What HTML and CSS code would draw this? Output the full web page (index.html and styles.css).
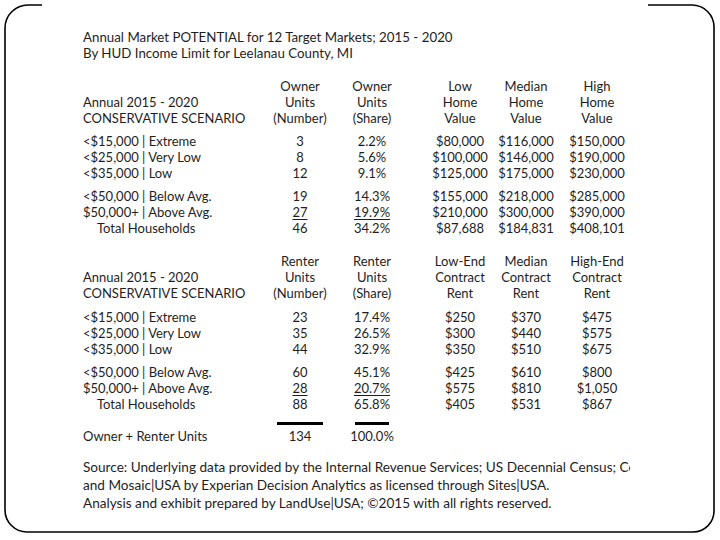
FILE: index.html
```html
<!DOCTYPE html>
<html>
<head>
<meta charset="utf-8">
<link rel="stylesheet" href="styles.css">
</head>
<body>
<svg class="frame" width="720" height="540" viewBox="0 0 720 540">
  <path d="M42,5 H28 A23,23 0 0 0 5,28 V510 A22,22 0 0 0 27,532 H693 A21,21 0 0 0 714,511 V27 A22,22 0 0 0 692,5 H648" fill="none" stroke="#000" stroke-width="1.6"/>
</svg>
<div class="sheet">
  <div class="title">
    <div>Annual Market POTENTIAL for 12 Target Markets; 2015 - 2020</div>
    <div>By HUD Income Limit for Leelanau County, MI</div>
  </div>

  <div class="table owner">
    <div class="row head">
      <div class="label">Annual 2015 - 2020<br>CONSERVATIVE SCENARIO</div>
      <div class="c">Owner<br>Units<br>(Number)</div>
      <div class="c">Owner<br>Units<br>(Share)</div>
      <div></div>
      <div class="c">Low<br>Home<br>Value</div>
      <div class="c">Median<br>Home<br>Value</div>
      <div class="c">High<br>Home<br>Value</div>
    </div>
    <div class="row first">
      <div class="label">&lt;$15,000 | Extreme</div>
      <div class="c">3</div><div class="c">2.2%</div><div></div>
      <div class="c">$80,000</div><div class="c">$116,000</div><div class="c">$150,000</div>
    </div>
    <div class="row">
      <div class="label">&lt;$25,000 | Very Low</div>
      <div class="c">8</div><div class="c">5.6%</div><div></div>
      <div class="c">$100,000</div><div class="c">$146,000</div><div class="c">$190,000</div>
    </div>
    <div class="row">
      <div class="label">&lt;$35,000 | Low</div>
      <div class="c">12</div><div class="c">9.1%</div><div></div>
      <div class="c">$125,000</div><div class="c">$175,000</div><div class="c">$230,000</div>
    </div>
    <div class="row group">
      <div class="label">&lt;$50,000 | Below Avg.</div>
      <div class="c">19</div><div class="c">14.3%</div><div></div>
      <div class="c">$155,000</div><div class="c">$218,000</div><div class="c">$285,000</div>
    </div>
    <div class="row">
      <div class="label">$50,000+ | Above Avg.</div>
      <div class="c"><u>27</u></div><div class="c"><u>19.9%</u></div><div></div>
      <div class="c">$210,000</div><div class="c">$300,000</div><div class="c">$390,000</div>
    </div>
    <div class="row">
      <div class="label total">Total Households</div>
      <div class="c">46</div><div class="c">34.2%</div><div></div>
      <div class="c">$87,688</div><div class="c">$184,831</div><div class="c">$408,101</div>
    </div>
  </div>

  <div class="table renter">
    <div class="row head">
      <div class="label">Annual 2015 - 2020<br>CONSERVATIVE SCENARIO</div>
      <div class="c">Renter<br>Units<br>(Number)</div>
      <div class="c">Renter<br>Units<br>(Share)</div>
      <div></div>
      <div class="c">Low-End<br>Contract<br>Rent</div>
      <div class="c">Median<br>Contract<br>Rent</div>
      <div class="c">High-End<br>Contract<br>Rent</div>
    </div>
    <div class="row first">
      <div class="label">&lt;$15,000 | Extreme</div>
      <div class="c">23</div><div class="c">17.4%</div><div></div>
      <div class="c">$250</div><div class="c">$370</div><div class="c">$475</div>
    </div>
    <div class="row">
      <div class="label">&lt;$25,000 | Very Low</div>
      <div class="c">35</div><div class="c">26.5%</div><div></div>
      <div class="c">$300</div><div class="c">$440</div><div class="c">$575</div>
    </div>
    <div class="row">
      <div class="label">&lt;$35,000 | Low</div>
      <div class="c">44</div><div class="c">32.9%</div><div></div>
      <div class="c">$350</div><div class="c">$510</div><div class="c">$675</div>
    </div>
    <div class="row group">
      <div class="label">&lt;$50,000 | Below Avg.</div>
      <div class="c">60</div><div class="c">45.1%</div><div></div>
      <div class="c">$425</div><div class="c">$610</div><div class="c">$800</div>
    </div>
    <div class="row">
      <div class="label">$50,000+ | Above Avg.</div>
      <div class="c"><u>28</u></div><div class="c"><u>20.7%</u></div><div></div>
      <div class="c">$575</div><div class="c">$810</div><div class="c">$1,050</div>
    </div>
    <div class="row">
      <div class="label total">Total Households</div>
      <div class="c">88</div><div class="c">65.8%</div><div></div>
      <div class="c">$405</div><div class="c">$531</div><div class="c">$867</div>
    </div>
    <div class="row sum">
      <div class="label">Owner + Renter Units</div>
      <div class="c"><span class="bar b1"></span>134</div>
      <div class="c"><span class="bar b2"></span>100.0%</div>
    </div>
  </div>

  <div class="source">
    <div>Source: Underlying data provided by the Internal Revenue Services; US Decennial Census; Cens</div>
    <div>and Mosaic|USA by Experian Decision Analytics as licensed through Sites|USA.</div>
    <div>Analysis and exhibit prepared by LandUse|USA; ©2015 with all rights reserved.</div>
  </div>
</div>
</body>
</html>
```

FILE: styles.css
```css
html, body {
  margin: 0;
  padding: 0;
  background: #fff;
}
body {
  width: 720px;
  height: 540px;
  position: relative;
  overflow: hidden;
  font-family: Lato, "Liberation Sans", sans-serif;
  color: #1e1e1e;
}
.frame {
  position: absolute;
  left: 0;
  top: 0;
}
.sheet {
  width: 630px;
  overflow: hidden;
  box-sizing: border-box;
  padding: 29px 0 0 83px;
  font-size: 13px;
  line-height: 16px;
  white-space: nowrap;
}
.title {
  font-size: 13.3px;
  line-height: 16px;
}
.table.owner {
  margin-top: 17px;
}
.table.renter {
  margin-top: 17px;
}
.row {
  display: grid;
  grid-template-columns: 183px 68px 76px 16px 68px 64px 78px;
  line-height: 16px;
}
.row.head {
  align-items: end;
}
.table.owner .row.first {
  margin-top: 7px;
}
.table.renter .row.first {
  margin-top: 8px;
}
.row.group {
  margin-top: 7px;
}
.c {
  text-align: center;
}
.label.total {
  padding-left: 14px;
}
u {
  text-decoration-thickness: 1px;
  text-underline-offset: 2px;
}
.row.sum {
  margin-top: 16px;
}
.row.sum .c {
  position: relative;
}
.bar {
  position: absolute;
  top: -6px;
  height: 3px;
  background: #000;
}
.bar.b1 {
  left: 11px;
  width: 46px;
}
.bar.b2 {
  left: 21px;
  width: 34px;
}
.source {
  margin-top: 14px;
  font-size: 13.6px;
  line-height: 18px;
}
```
